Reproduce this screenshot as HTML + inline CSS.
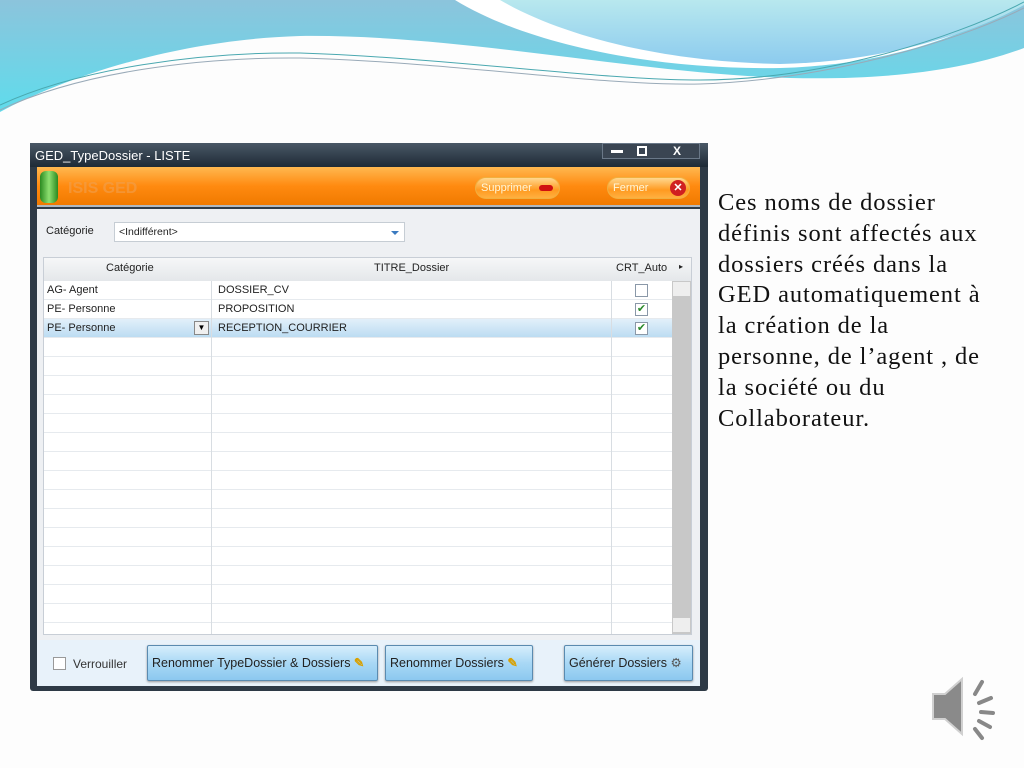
<!DOCTYPE html>
<html><head><meta charset="utf-8"><style>
*{margin:0;padding:0;box-sizing:border-box}
body{width:1024px;height:768px;background:#fdfdfd;position:relative;overflow:hidden;font-family:"Liberation Sans",sans-serif}
.a{position:absolute}
.t{font-size:11px;color:#222}
.row{position:absolute;left:44px;width:628px;height:19px;border-bottom:1px solid #e6eaee}
.vl{position:absolute;top:281px;height:353px;width:1px;background:#d8dde2}
.btn{position:absolute;top:645px;height:36px;border:1px solid #5a8bb0;background:linear-gradient(#d6eefc,#a9d8f5 50%,#8cc8ef);font-size:12.5px;color:#222;line-height:34px;padding-left:4px;border-radius:2px;box-shadow:0 1px 2px #999;white-space:nowrap}
.chk{position:absolute;width:13px;height:13px;border:1px solid #8a98a8;background:#fff;font-size:11px;color:#2a8a2a;line-height:11px;text-align:center}
.orb{position:absolute;top:177px;height:22px;border-radius:11px;border:1px solid #f0b040;background:linear-gradient(#ffd890,#ff9a20 60%,#ffb040);color:#fff6d8;font-size:11px;line-height:20px;padding-left:5px}
</style></head><body>
<svg class="a" style="left:0;top:0" width="1024" height="130" viewBox="0 0 1024 130">
<defs><linearGradient id="g1" x1="0" y1="0" x2="0" y2="1"><stop offset="0" stop-color="#8cc4dc"/><stop offset="1" stop-color="#5fdcec"/></linearGradient>
<linearGradient id="g2" x1="0" y1="0" x2="0" y2="1"><stop offset="0" stop-color="#b8e8ee"/><stop offset="1" stop-color="#8ccbee"/></linearGradient></defs>
<path d="M0 0H1024V48C960 72 880 80 790 78C640 74 460 34 300 36C170 40 60 80 0 112Z" fill="url(#g1)"/>
<path d="M455 0C520 40 640 70 780 68C880 65 960 40 1024 0Z" fill="#fff"/>
<path d="M500 0C560 35 660 62 780 64C880 62 970 35 1024 5V0Z" fill="url(#g2)"/>
<path d="M0 105C80 68 200 52 300 53C450 58 600 80 700 80C820 80 950 40 1024 2" stroke="#4aa8b0" fill="none" stroke-width="1"/>
<path d="M0 110C80 72 200 57 300 58C450 62 600 86 700 84C820 80 950 45 1024 8" stroke="#99aab8" fill="none" stroke-width="1"/>
</svg>
<div class="a" style="left:30px;top:143px;width:678px;height:548px;background:#2e3a46;border-radius:3px"></div>
<div class="a" style="left:30px;top:143px;width:678px;height:24px;background:linear-gradient(#4a5866,#1e2a36)"></div>
<div class="a" style="left:35px;top:148px;color:#fff;font-size:13px">GED_TypeDossier - LISTE</div>
<div class="a" style="left:602px;top:143px;width:98px;height:16px;background:#3a4552;border:1px solid #6a7888;color:#fff;font-size:12px;font-weight:bold;line-height:14px"><span style="position:absolute;left:8px;top:6px;width:12px;height:3px;background:#fff"></span><span style="position:absolute;left:34px;top:2px;width:10px;height:10px;border:2px solid #fff"></span><span style="position:absolute;left:70px">X</span></div>
<div class="a" style="left:37px;top:167px;width:663px;height:40px;background:linear-gradient(#ffb850,#ff8a10 50%,#f07a00);border-bottom:2px solid #b0b8c0"></div>
<div class="a" style="left:40px;top:171px;width:18px;height:32px;border-radius:6px;background:linear-gradient(90deg,#2a8a20,#8ee070,#2a8a20)"></div>
<div class="a" style="left:68px;top:180px;color:#f0a050;font-size:16px;font-weight:bold;opacity:.6">ISIS GED</div>
<div class="orb" style="left:475px;width:85px">Supprimer<span style="position:absolute;left:63px;top:7px;width:14px;height:6px;border-radius:3px;background:#d01010"></span></div>
<div class="orb" style="left:607px;width:83px">Fermer<span style="position:absolute;left:62px;top:2px;width:16px;height:16px;border-radius:8px;background:#d02020;color:#fff;font-weight:bold;text-align:center;line-height:16px;font-size:11px">✕</span></div>
<div class="a" style="left:37px;top:209px;width:663px;height:431px;background:#eef0f3"></div>
<div class="a t" style="left:46px;top:225px">Catégorie</div>
<div class="a t" style="left:114px;top:222px;width:291px;height:20px;background:#fff;border:1px solid #c6cdd4;padding:3px 4px;font-size:10.5px">&lt;Indifférent&gt;<span style="position:absolute;right:5px;top:8px;border:4px solid transparent;border-top:4px solid #3a7ac0"></span></div>
<div class="a" style="left:37px;top:640px;width:663px;height:46px;background:#e8f2fa"></div>
<div class="a" style="left:43px;top:257px;width:649px;height:378px;background:#fff;border:1px solid #c8ced6"></div>
<div class="a" style="left:44px;top:258px;width:647px;height:23px;background:linear-gradient(#f6f7f8,#e4e7ea)"></div>
<div class="a t" style="left:106px;top:262px">Catégorie</div>
<div class="a t" style="left:374px;top:262px">TITRE_Dossier</div>
<div class="a t" style="left:616px;top:262px">CRT_Auto</div>
<div class="a t" style="left:679px;top:262px;font-size:8px">▸</div>
<div class="row" style="top:281px"></div><div class="row" style="top:300px"></div>
<div class="row" style="top:319px;background:linear-gradient(#e2f0fa,#bcdcf2)"></div>
<div class="row" style="top:338px"></div><div class="row" style="top:357px"></div><div class="row" style="top:376px"></div><div class="row" style="top:395px"></div><div class="row" style="top:414px"></div><div class="row" style="top:433px"></div><div class="row" style="top:452px"></div><div class="row" style="top:471px"></div><div class="row" style="top:490px"></div><div class="row" style="top:509px"></div><div class="row" style="top:528px"></div><div class="row" style="top:547px"></div><div class="row" style="top:566px"></div><div class="row" style="top:585px"></div><div class="row" style="top:604px"></div>
<div class="vl" style="left:211px"></div><div class="vl" style="left:611px"></div>
<div class="a" style="left:672px;top:281px;width:19px;height:353px;background:#c8c8c8"></div>
<div class="a" style="left:673px;top:282px;width:17px;height:14px;background:#eee"></div>
<div class="a" style="left:673px;top:618px;width:17px;height:14px;background:#eee"></div>
<div class="a t" style="left:47px;top:284px">AG- Agent</div>
<div class="a t" style="left:218px;top:284px">DOSSIER_CV</div>
<div class="a t" style="left:47px;top:303px">PE- Personne</div>
<div class="a t" style="left:218px;top:303px">PROPOSITION</div>
<div class="a t" style="left:47px;top:322px">PE- Personne</div>
<div class="a t" style="left:218px;top:322px">RECEPTION_COURRIER</div>
<div class="a" style="left:194px;top:321px;width:15px;height:14px;background:#f0f0f0;border:1px solid #888;font-size:8px;text-align:center;line-height:12px">▼</div>
<div class="chk" style="left:635px;top:284px"></div>
<div class="chk" style="left:635px;top:303px">✔</div>
<div class="chk" style="left:635px;top:322px">✔</div>
<div class="chk" style="left:53px;top:657px;border-color:#999"></div>
<div class="a" style="left:73px;top:657px;font-size:12px;color:#333">Verrouiller</div>
<div class="btn" style="left:147px;width:231px">Renommer TypeDossier &amp; Dossiers <span style="color:#d8a000;font-weight:bold">✎</span></div>
<div class="btn" style="left:385px;width:148px">Renommer Dossiers <span style="color:#d8a000;font-weight:bold">✎</span></div>
<div class="btn" style="left:564px;width:129px">Générer Dossiers <span style="color:#555">⚙</span></div>
<div class="a" style="left:718px;top:188px;font-family:'Liberation Serif',serif;font-size:24.5px;letter-spacing:0.9px;line-height:30.8px;color:#111;white-space:nowrap">Ces noms de dossier<br>définis sont affectés aux<br>dossiers créés dans la<br>GED automatiquement à<br>la création de la<br>personne, de l’agent , de<br>la société ou du<br>Collaborateur.</div>
<svg class="a" style="left:925px;top:672px" width="75" height="70" viewBox="0 0 75 70">
<path d="M8 22H20L37 7V62L20 47H8Z" fill="#8a8a8a" stroke="#d0d0d0" stroke-width="2"/>
<g stroke="#888" stroke-width="4" stroke-linecap="round"><line x1="50" y1="22" x2="57" y2="10"/><line x1="54" y1="31" x2="66" y2="26"/><line x1="56" y1="40" x2="68" y2="41"/><line x1="54" y1="49" x2="65" y2="55"/><line x1="50" y1="57" x2="57" y2="66"/></g>
</svg>
</body></html>
